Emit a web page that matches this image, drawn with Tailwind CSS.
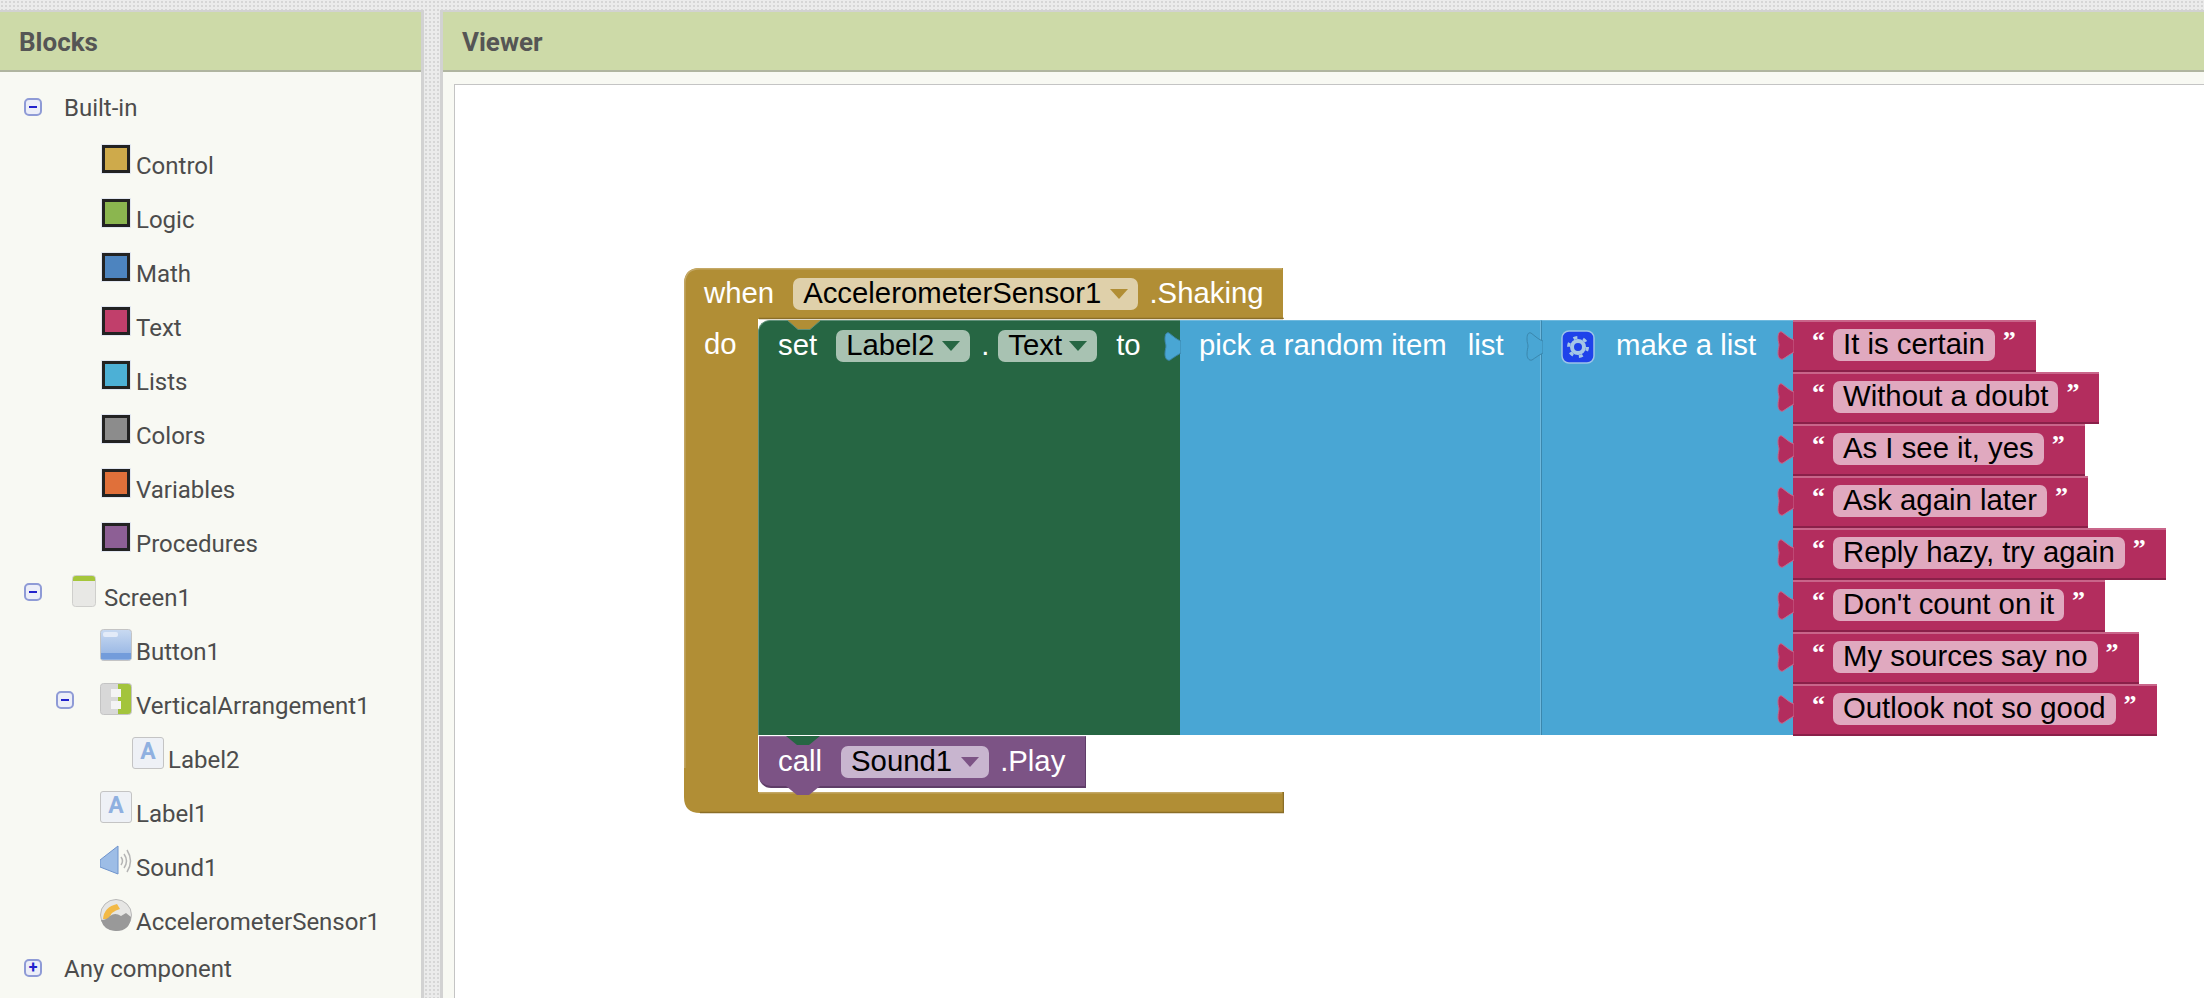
<!DOCTYPE html>
<html lang="en">
<head>
    <meta charset="UTF-8">
    <title>Blocks Viewer</title>
    <script src="https://cdn.jsdelivr.net/npm/@tailwindcss/browser@4"></script>
</head>
<body class="h-[998px] w-[2204px] overflow-hidden bg-[#ebebeb] bg-[radial-gradient(#d6d6d6_1px,transparent_1px)] bg-[size:4px_4px] font-['Roboto',sans-serif]">
    <div class="flex h-full gap-[16px] pt-[10px]">
        <!-- Blocks tree -->
        <aside class="flex w-[424px] shrink-0 flex-col border-r-[3px] border-t-2 border-[#d2d2d2] bg-[#f8f9f3]">
            <h2 class="h-[60px] shrink-0 border-b-2 border-[#b0b5a0] bg-[#cddaa8] pl-[19px] text-[26px] font-bold leading-[60px] text-[#555]">Blocks</h2>
            <ul class="pt-[10px] text-[24px] leading-[52px] text-[#4c4c4c]">
                <li class="mb-[4px] flex h-[54px] items-start pl-[24px]">
                    <span class="mt-[16px] flex h-[18px] w-[18px] items-center justify-center rounded-[5px] border-2 border-[#8f9bd6] bg-[#eceef8]"><span class="h-[2px] w-[8px] bg-[#2222cc]"></span></span>
                    <span class="ml-[22px]">Built-in</span>
                </li>
                <li class="flex h-[54px] items-start pl-[102px]"><span class="mt-[5px] h-[28px] w-[28px] border-[3px] border-[#222] bg-[#ceaa4b] ring-1 ring-[#e2e7f1]"></span><span class="ml-[6px]">Control</span></li>
                <li class="flex h-[54px] items-start pl-[102px]"><span class="mt-[5px] h-[28px] w-[28px] border-[3px] border-[#222] bg-[#8bb64f] ring-1 ring-[#e2e7f1]"></span><span class="ml-[6px]">Logic</span></li>
                <li class="flex h-[54px] items-start pl-[102px]"><span class="mt-[5px] h-[28px] w-[28px] border-[3px] border-[#222] bg-[#4d84bf] ring-1 ring-[#e2e7f1]"></span><span class="ml-[6px]">Math</span></li>
                <li class="flex h-[54px] items-start pl-[102px]"><span class="mt-[5px] h-[28px] w-[28px] border-[3px] border-[#222] bg-[#c13f6b] ring-1 ring-[#e2e7f1]"></span><span class="ml-[6px]">Text</span></li>
                <li class="flex h-[54px] items-start pl-[102px]"><span class="mt-[5px] h-[28px] w-[28px] border-[3px] border-[#222] bg-[#4cb0d6] ring-1 ring-[#e2e7f1]"></span><span class="ml-[6px]">Lists</span></li>
                <li class="flex h-[54px] items-start pl-[102px]"><span class="mt-[5px] h-[28px] w-[28px] border-[3px] border-[#222] bg-[#8c8c8c] ring-1 ring-[#e2e7f1]"></span><span class="ml-[6px]">Colors</span></li>
                <li class="flex h-[54px] items-start pl-[102px]"><span class="mt-[5px] h-[28px] w-[28px] border-[3px] border-[#222] bg-[#e0703a] ring-1 ring-[#e2e7f1]"></span><span class="ml-[6px]">Variables</span></li>
                <li class="flex h-[54px] items-start pl-[102px]"><span class="mt-[5px] h-[28px] w-[28px] border-[3px] border-[#222] bg-[#8d5f95] ring-1 ring-[#e2e7f1]"></span><span class="ml-[6px]">Procedures</span></li>

                <li class="flex h-[54px] items-start pl-[24px]">
                    <span class="mt-[11px] flex h-[18px] w-[18px] items-center justify-center rounded-[5px] border-2 border-[#8f9bd6] bg-[#eceef8]"><span class="h-[2px] w-[8px] bg-[#2222cc]"></span></span>
                    <svg class="ml-[30px] mt-[3px]" width="24" height="32" viewBox="0 0 24 32">
                        <rect x=".5" y=".5" width="23" height="31" rx="3" fill="#e8e8e5" stroke="#cfcfcc"/>
                        <path d="M1 6V3.500Q1 1 3.500 1h17Q23 1 23 3.500V6Z" fill="#a5c63b"/>
                    </svg>
                    <span class="ml-[8px]">Screen1</span>
                </li>
                <li class="flex h-[54px] items-start pl-[100px]">
                    <svg class="mt-[3px]" width="32" height="32" viewBox="0 0 32 32">
                        <defs><linearGradient id="btn" x1="0" y1="0" x2="0" y2="1"><stop offset="0" stop-color="#c9daf1"/><stop offset="1" stop-color="#8fb0e2"/></linearGradient></defs>
                        <rect x=".5" y=".5" width="31" height="31" rx="3" fill="url(#btn)" stroke="#c4c4c4"/>
                        <rect x="1" y="24" width="30" height="6" fill="#739cdb"/>
                        <rect x="3" y="3" width="15" height="5" rx="2" fill="#e3ebf8"/>
                    </svg>
                    <span class="ml-[4px]">Button1</span>
                </li>
                <li class="flex h-[54px] items-start pl-[56px]">
                    <span class="mt-[11px] flex h-[18px] w-[18px] items-center justify-center rounded-[5px] border-2 border-[#8f9bd6] bg-[#eceef8]"><span class="h-[2px] w-[8px] bg-[#2222cc]"></span></span>
                    <svg class="ml-[26px] mt-[3px]" width="32" height="32" viewBox="0 0 32 32">
                        <rect x=".5" y=".5" width="31" height="31" rx="3" fill="#d8d8d8" stroke="#c4c4c4"/>
                        <path d="M18 1h10q3 0 3 3v24q0 3-3 3H18Z" fill="#a3c43c"/>
                        <rect x="11" y="6" width="10" height="8" fill="#f4f4f4"/>
                        <rect x="11" y="18" width="10" height="8" fill="#f4f4f4"/>
                    </svg>
                    <span class="ml-[4px]">VerticalArrangement1</span>
                </li>
                <li class="flex h-[54px] items-start pl-[132px]">
                    <span class="mt-[3px] flex h-[32px] w-[32px] items-start justify-center rounded-[3px] border border-[#c4c4c4] bg-[#eef1f6] text-[23px] font-bold leading-[28px] text-[#8fb0e0]">A</span>
                    <span class="ml-[4px]">Label2</span>
                </li>
                <li class="flex h-[54px] items-start pl-[100px]">
                    <span class="mt-[3px] flex h-[32px] w-[32px] items-start justify-center rounded-[3px] border border-[#c4c4c4] bg-[#eef1f6] text-[23px] font-bold leading-[28px] text-[#8fb0e0]">A</span>
                    <span class="ml-[4px]">Label1</span>
                </li>
                <li class="flex h-[54px] items-start pl-[100px]">
                    <svg class="mt-[3px]" width="32" height="32" viewBox="0 0 32 32">
                        <path d="M0 15 18 1V29L0 22Z" fill="#9dbde6" stroke="#6f94cc"/>
                        <g fill="none" stroke="#b5b5b5" stroke-width="1.500">
                            <path d="M21 12q3 4 0 8"/>
                            <path d="M24 9q5 7 0 14"/>
                            <path d="M27 5q7 11 0 22"/>
                        </g>
                    </svg>
                    <span class="ml-[4px]">Sound1</span>
                </li>
                <li class="flex h-[54px] items-start pl-[100px]">
                    <svg class="mt-[3px]" width="32" height="32" viewBox="0 0 32 32">
                        <circle cx="16" cy="16" r="15.500" fill="#e6e6e4" stroke="#b8b8b8"/>
                        <path d="M3 20Q4 8 17 5l3 5Q11 12 9 20Z" fill="#f2b945"/>
                        <path d="M1 21Q7 21 10 17 15 13 21 17L26 14 31 18Q30 32 16 32 4 32 1 21Z" fill="#999"/>
                    </svg>
                    <span class="ml-[4px]">AccelerometerSensor1</span>
                </li>
                <li class="flex h-[40px] items-start pl-[24px] leading-[38px]">
                    <span class="mt-[9px] flex h-[18px] w-[18px] items-center justify-center rounded-[5px] border-2 border-[#8f9bd6] bg-[#eceef8] text-[16px] font-bold leading-none text-[#2222cc]">+</span>
                    <span class="ml-[22px]">Any component</span>
                </li>
            </ul>
        </aside>

        <!-- Viewer -->
        <main class="flex flex-1 flex-col border-l-[3px] border-t-2 border-[#d2d2d2] bg-[#f8f9f3]">
            <h2 class="h-[60px] shrink-0 border-b-2 border-[#b0b5a0] bg-[#cddaa8] pl-[19px] text-[26px] font-bold leading-[60px] text-[#555]">Viewer</h2>
            <div class="relative ml-[11px] mt-[12px] flex-1 border-l border-t border-[#c4c4c4] bg-white">
                <!-- block canvas, origin at the top-left of the "when" block -->
                <div class="absolute left-[229px] top-[183px] font-['Liberation_Sans',sans-serif] text-[29.33px] leading-[30px] text-white">
                    <svg class="absolute left-0 top-0" width="600" height="546" viewBox="0 0 600 546">
                        <path d="M16 0H599V51H74V524H599V545H16Q0 545 0 529V16Q0 0 16 0Z" fill="#b18e35"/>
                        <path d="M.8 500V16Q.8 .8 16 .8H598M75 524.800H598" fill="none" stroke="#c4a866" stroke-width="1.500"/>
                        <path d="M16 544.500H599.500V524M599 51V50.500H75" fill="none" stroke="#8a6e28" stroke-width="1.500"/>
                    </svg>

                    <div class="absolute left-[20px] top-[10px] flex h-[32px] items-start whitespace-nowrap">
                        <span>when</span>
                        <span class="ml-[19px] flex h-[32px] items-start rounded-[7px] bg-[#dfd0aa] pl-[10px] pr-[10px] text-black">AccelerometerSensor1<svg class="ml-[9px] self-center" width="18" height="10" viewBox="0 0 18 10"><path d="M0 0H18L9 10Z" fill="#b18e35"/></svg></span>
                        <span class="ml-[11px]">.Shaking</span>
                    </div>
                    <div class="absolute left-[20px] top-[61px]">do</div>

                    <!-- set Label2.Text -->
                    <div class="absolute left-[74px] top-[52px] flex h-[415px] w-[422px] items-start rounded-tl-[12px] border-l border-t border-[#5f9078] bg-[#266643] pl-[19px] pt-[9px]">
                        <svg class="absolute left-[28px] -top-[1px]" width="34" height="11" viewBox="0 0 34 11"><path d="M0 0 11 9.500H23L34 0" fill="#b18e35" stroke="#5f9078"/></svg>
                        <span>set</span>
                        <span class="ml-[19px] flex h-[32px] items-start rounded-[7px] bg-[#a8c2b2] pl-[10px] pr-[10px] text-black">Label2<svg class="ml-[8px] self-center" width="18" height="10" viewBox="0 0 18 10"><path d="M0 0H18L9 10Z" fill="#266643"/></svg></span>
                        <span class="ml-[11px]">.</span>
                        <span class="ml-[9px] flex h-[32px] items-start rounded-[7px] bg-[#a8c2b2] pl-[10px] pr-[10px] text-black">Text<svg class="ml-[7px] self-center" width="18" height="10" viewBox="0 0 18 10"><path d="M0 0H18L9 10Z" fill="#266643"/></svg></span>
                        <span class="ml-[19px]">to</span>
                    </div>

                    <!-- pick a random item -->
                    <div class="absolute left-[496px] top-[52px] flex h-[415px] w-[361px] items-start whitespace-nowrap border-r border-t border-[#6fb9de] bg-[#49a6d4] pl-[19px] pt-[9px]">
                        <svg class="absolute -left-[16px] top-[11px]" width="17" height="29" viewBox="0 0 17 29"><path d="M17 9C13 8 9 4 5 1 2 0 1 3 1 7 1 11 2 12 2 14 2 16 1 18 1 22 1 26 3 29 6 28 9 26 13 23 17 21Z" fill="#49a6d4" stroke="#3b87ad"/></svg>
                        <span>pick a random item</span>
                        <span class="ml-[21px]">list</span>
                    </div>

                    <!-- make a list -->
                    <div class="absolute left-[857px] top-[52px] flex h-[415px] w-[252px] items-start whitespace-nowrap border-l border-t border-[#6fb9de] border-l-[#3b87ad] bg-[#49a6d4] pl-[19px] pt-[9px]">
                        <svg class="absolute -left-[16px] top-[11px]" width="17" height="29" viewBox="0 0 17 29"><path d="M17 9C13 8 9 4 5 1 2 0 1 3 1 7 1 11 2 12 2 14 2 16 1 18 1 22 1 26 3 29 6 28 9 26 13 23 17 21Z" fill="#49a6d4" stroke="#3b87ad"/></svg>
                        <svg width="34" height="34" viewBox="0 0 34 34">
                            <rect x="1" y="1" width="32" height="32" rx="7" fill="#1f42ea" stroke="#9cc3e8" stroke-width="1.500"/>
                            <circle cx="17" cy="17" r="9.500" fill="none" stroke="#a6c7e6" stroke-width="3" stroke-dasharray="4 5.950"/>
                            <circle cx="17" cy="17" r="6" fill="none" stroke="#a6c7e6" stroke-width="4"/>
                        </svg>
                        <span class="ml-[21px]">make a list</span>
                    </div>

                    <!-- text items -->
                    <div class="absolute left-[1109px] top-[52px] flex flex-col items-start whitespace-nowrap">
                        <div class="relative flex h-[52px] items-start border-b-2 border-t-2 border-b-[#8a2049] border-t-[#c9658a] bg-[#b32d5e] pl-[21px] pr-[22px] pt-[7px]">
                            <svg class="absolute -left-[16px] top-[9px]" width="17" height="29" viewBox="0 0 17 29"><path d="M17 9C13 8 9 4 5 1 2 0 1 3 1 7 1 11 2 12 2 14 2 16 1 18 1 22 1 26 3 29 6 28 9 26 13 23 17 21Z" fill="#b32d5e" stroke="#c9658a"/></svg>
                            <span class="flex w-[9px] -translate-y-[1px] justify-center font-['Liberation_Serif'] text-[26px] font-bold leading-[26px]">“</span>
                            <span class="ml-[10px] h-[32px] rounded-[7px] bg-[#e0a9bf] px-[10px] text-black">It is certain</span>
                            <span class="ml-[10px] flex w-[9px] -translate-y-[1px] justify-center font-['Liberation_Serif'] text-[26px] font-bold leading-[26px]">”</span>
                        </div>
                        <div class="relative flex h-[52px] items-start border-b-2 border-t-2 border-b-[#8a2049] border-t-[#c9658a] bg-[#b32d5e] pl-[21px] pr-[22px] pt-[7px]">
                            <svg class="absolute -left-[16px] top-[9px]" width="17" height="29" viewBox="0 0 17 29"><path d="M17 9C13 8 9 4 5 1 2 0 1 3 1 7 1 11 2 12 2 14 2 16 1 18 1 22 1 26 3 29 6 28 9 26 13 23 17 21Z" fill="#b32d5e" stroke="#c9658a"/></svg>
                            <span class="flex w-[9px] -translate-y-[1px] justify-center font-['Liberation_Serif'] text-[26px] font-bold leading-[26px]">“</span>
                            <span class="ml-[10px] h-[32px] rounded-[7px] bg-[#e0a9bf] px-[10px] text-black">Without a doubt</span>
                            <span class="ml-[10px] flex w-[9px] -translate-y-[1px] justify-center font-['Liberation_Serif'] text-[26px] font-bold leading-[26px]">”</span>
                        </div>
                        <div class="relative flex h-[52px] items-start border-b-2 border-t-2 border-b-[#8a2049] border-t-[#c9658a] bg-[#b32d5e] pl-[21px] pr-[22px] pt-[7px]">
                            <svg class="absolute -left-[16px] top-[9px]" width="17" height="29" viewBox="0 0 17 29"><path d="M17 9C13 8 9 4 5 1 2 0 1 3 1 7 1 11 2 12 2 14 2 16 1 18 1 22 1 26 3 29 6 28 9 26 13 23 17 21Z" fill="#b32d5e" stroke="#c9658a"/></svg>
                            <span class="flex w-[9px] -translate-y-[1px] justify-center font-['Liberation_Serif'] text-[26px] font-bold leading-[26px]">“</span>
                            <span class="ml-[10px] h-[32px] rounded-[7px] bg-[#e0a9bf] px-[10px] text-black">As I see it, yes</span>
                            <span class="ml-[10px] flex w-[9px] -translate-y-[1px] justify-center font-['Liberation_Serif'] text-[26px] font-bold leading-[26px]">”</span>
                        </div>
                        <div class="relative flex h-[52px] items-start border-b-2 border-t-2 border-b-[#8a2049] border-t-[#c9658a] bg-[#b32d5e] pl-[21px] pr-[22px] pt-[7px]">
                            <svg class="absolute -left-[16px] top-[9px]" width="17" height="29" viewBox="0 0 17 29"><path d="M17 9C13 8 9 4 5 1 2 0 1 3 1 7 1 11 2 12 2 14 2 16 1 18 1 22 1 26 3 29 6 28 9 26 13 23 17 21Z" fill="#b32d5e" stroke="#c9658a"/></svg>
                            <span class="flex w-[9px] -translate-y-[1px] justify-center font-['Liberation_Serif'] text-[26px] font-bold leading-[26px]">“</span>
                            <span class="ml-[10px] h-[32px] rounded-[7px] bg-[#e0a9bf] px-[10px] text-black">Ask again later</span>
                            <span class="ml-[10px] flex w-[9px] -translate-y-[1px] justify-center font-['Liberation_Serif'] text-[26px] font-bold leading-[26px]">”</span>
                        </div>
                        <div class="relative flex h-[52px] items-start border-b-2 border-t-2 border-b-[#8a2049] border-t-[#c9658a] bg-[#b32d5e] pl-[21px] pr-[22px] pt-[7px]">
                            <svg class="absolute -left-[16px] top-[9px]" width="17" height="29" viewBox="0 0 17 29"><path d="M17 9C13 8 9 4 5 1 2 0 1 3 1 7 1 11 2 12 2 14 2 16 1 18 1 22 1 26 3 29 6 28 9 26 13 23 17 21Z" fill="#b32d5e" stroke="#c9658a"/></svg>
                            <span class="flex w-[9px] -translate-y-[1px] justify-center font-['Liberation_Serif'] text-[26px] font-bold leading-[26px]">“</span>
                            <span class="ml-[10px] h-[32px] rounded-[7px] bg-[#e0a9bf] px-[10px] text-black">Reply hazy, try again</span>
                            <span class="ml-[10px] flex w-[9px] -translate-y-[1px] justify-center font-['Liberation_Serif'] text-[26px] font-bold leading-[26px]">”</span>
                        </div>
                        <div class="relative flex h-[52px] items-start border-b-2 border-t-2 border-b-[#8a2049] border-t-[#c9658a] bg-[#b32d5e] pl-[21px] pr-[22px] pt-[7px]">
                            <svg class="absolute -left-[16px] top-[9px]" width="17" height="29" viewBox="0 0 17 29"><path d="M17 9C13 8 9 4 5 1 2 0 1 3 1 7 1 11 2 12 2 14 2 16 1 18 1 22 1 26 3 29 6 28 9 26 13 23 17 21Z" fill="#b32d5e" stroke="#c9658a"/></svg>
                            <span class="flex w-[9px] -translate-y-[1px] justify-center font-['Liberation_Serif'] text-[26px] font-bold leading-[26px]">“</span>
                            <span class="ml-[10px] h-[32px] rounded-[7px] bg-[#e0a9bf] px-[10px] text-black">Don't count on it</span>
                            <span class="ml-[10px] flex w-[9px] -translate-y-[1px] justify-center font-['Liberation_Serif'] text-[26px] font-bold leading-[26px]">”</span>
                        </div>
                        <div class="relative flex h-[52px] items-start border-b-2 border-t-2 border-b-[#8a2049] border-t-[#c9658a] bg-[#b32d5e] pl-[21px] pr-[22px] pt-[7px]">
                            <svg class="absolute -left-[16px] top-[9px]" width="17" height="29" viewBox="0 0 17 29"><path d="M17 9C13 8 9 4 5 1 2 0 1 3 1 7 1 11 2 12 2 14 2 16 1 18 1 22 1 26 3 29 6 28 9 26 13 23 17 21Z" fill="#b32d5e" stroke="#c9658a"/></svg>
                            <span class="flex w-[9px] -translate-y-[1px] justify-center font-['Liberation_Serif'] text-[26px] font-bold leading-[26px]">“</span>
                            <span class="ml-[10px] h-[32px] rounded-[7px] bg-[#e0a9bf] px-[10px] text-black">My sources say no</span>
                            <span class="ml-[10px] flex w-[9px] -translate-y-[1px] justify-center font-['Liberation_Serif'] text-[26px] font-bold leading-[26px]">”</span>
                        </div>
                        <div class="relative flex h-[52px] items-start border-b-2 border-t-2 border-b-[#8a2049] border-t-[#c9658a] bg-[#b32d5e] pl-[21px] pr-[22px] pt-[7px]">
                            <svg class="absolute -left-[16px] top-[9px]" width="17" height="29" viewBox="0 0 17 29"><path d="M17 9C13 8 9 4 5 1 2 0 1 3 1 7 1 11 2 12 2 14 2 16 1 18 1 22 1 26 3 29 6 28 9 26 13 23 17 21Z" fill="#b32d5e" stroke="#c9658a"/></svg>
                            <span class="flex w-[9px] -translate-y-[1px] justify-center font-['Liberation_Serif'] text-[26px] font-bold leading-[26px]">“</span>
                            <span class="ml-[10px] h-[32px] rounded-[7px] bg-[#e0a9bf] px-[10px] text-black">Outlook not so good</span>
                            <span class="ml-[10px] flex w-[9px] -translate-y-[1px] justify-center font-['Liberation_Serif'] text-[26px] font-bold leading-[26px]">”</span>
                        </div>
                    </div>

                    <!-- call Sound1.Play -->
                    <div class="absolute left-[75px] top-[468px] flex h-[52px] w-[327px] items-start whitespace-nowrap rounded-bl-[12px] border-b-2 border-r border-t border-[#93709b] border-b-[#5f3d68] border-r-[#5f3d68] bg-[#7c5385] pl-[19px] pt-[9px]">
                        <svg class="absolute left-[27px] -top-[1px]" width="34" height="10" viewBox="0 0 34 10"><path d="M0 0 11 9H23L34 0Z" fill="#266643"/></svg>
                        <svg class="absolute -bottom-[10px] left-[27px]" width="34" height="10" viewBox="0 0 34 10"><path d="M0 0 11 9H23L34 0Z" fill="#7c5385"/></svg>
                        <span>call</span>
                        <span class="ml-[19px] flex h-[32px] items-start rounded-[7px] bg-[#c8b5cf] pl-[10px] pr-[10px] text-black">Sound1<svg class="ml-[9px] self-center" width="18" height="10" viewBox="0 0 18 10"><path d="M0 0H18L9 10Z" fill="#7c5385"/></svg></span>
                        <span class="ml-[11px]">.Play</span>
                    </div>
                </div>
            </div>
        </main>
    </div>
</body>
</html>
